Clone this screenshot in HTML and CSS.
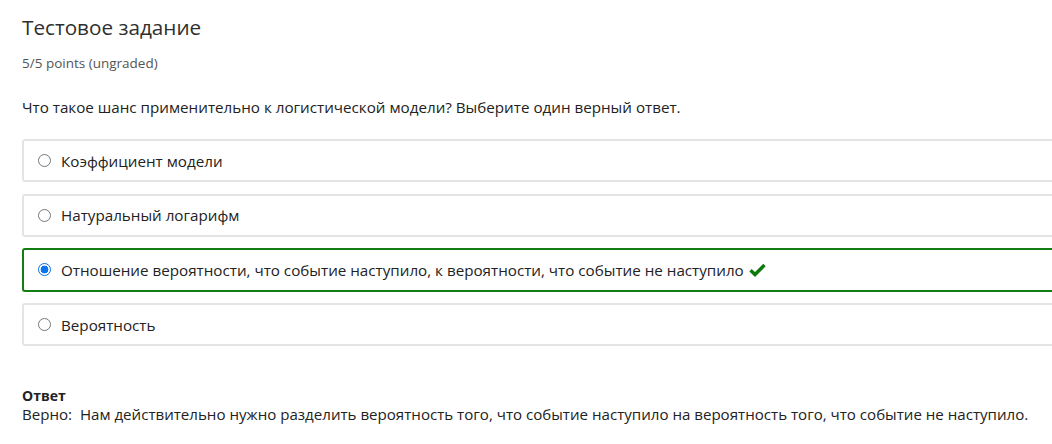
FILE: index.html
```html
<!DOCTYPE html>
<html lang="ru">
<head>
<meta charset="utf-8">
<link rel="stylesheet" href="styles.css">
</head>
<body>
<div class="page">
  <h2 class="title">Тестовое задание</h2>
  <div class="points">5/5 points (ungraded)</div>
  <p class="question">Что такое шанс применительно к логистической модели? Выберите один верный ответ.</p>
  <div class="options">
    <label class="option"><span class="radio"></span><span>Коэффициент модели</span></label>
    <label class="option"><span class="radio"></span><span>Натуральный логарифм</span></label>
    <label class="option correct"><span class="radio checked"></span><span>Отношение вероятности, что событие наступило, к вероятности, что событие не наступило</span>
      <svg class="check" width="17" height="14" viewBox="0 0 17 14"><path d="M1.5 7.2 L6 11.5 L15.5 2" fill="none" stroke="#0e7a0e" stroke-width="3.4" stroke-linejoin="miter"/></svg>
    </label>
    <label class="option"><span class="radio"></span><span>Вероятность</span></label>
  </div>
  <div class="answer">
    <div class="answer-head">Ответ</div>
    <div class="answer-text">Верно:&nbsp; Нам действительно нужно разделить вероятность того, что событие наступило на вероятность того, что событие не наступило.</div>
  </div>
</div>
</body>
</html>
```
FILE: styles.css
```css
html, body {
  margin: 0;
  padding: 0;
  background: #fff;
  overflow: hidden;
}
body {
  font-family: "Open Sans", "Noto Sans", sans-serif;
  color: #313131;
}
.page {
  padding: 13px 0 0 22px;
}
.title {
  margin: 0;
  font-size: 20.7px;
  font-weight: 400;
  line-height: 28px;
  color: #2f2f2f;
}
.points {
  margin-top: 14px;
  font-size: 13.5px;
  line-height: 16px;
  color: #555;
}
.question {
  margin: 26px 0 0 0;
  font-size: 15.2px;
  line-height: 20px;
  color: #222;
}
.options {
  margin-top: 22px;
  width: 1060px;
  display: flex;
  flex-direction: column;
  gap: 11.5px;
}
.option {
  display: flex;
  align-items: center;
  height: 39px;
  border: 2px solid #e4e4e4;
  border-radius: 3px;
  padding-left: 14px;
  font-size: 15.2px;
  color: #222;
}
.option.correct {
  border-color: #137d13;
  height: 39.5px;
}
.radio {
  border: 1px solid #777;
  border-radius: 50%;
  margin-right: 10px;
  flex: none;
  box-sizing: border-box;
  width: 13px;
  height: 13px;
}
.radio.checked {
  border: 1px solid #0a6ee0;
  background: radial-gradient(circle, #0a73f0 0 3.6px, #fff 4.2px);
}
.check {
  margin-left: 5px;
}
.answer {
  margin-top: 41px;
}
.answer-head {
  font-weight: 700;
  font-size: 14px;
  line-height: 18px;
  color: #222;
}
.answer-text {
  margin-top: -1px;
  font-size: 15.1px;
  line-height: 20px;
  color: #222;
}
```
